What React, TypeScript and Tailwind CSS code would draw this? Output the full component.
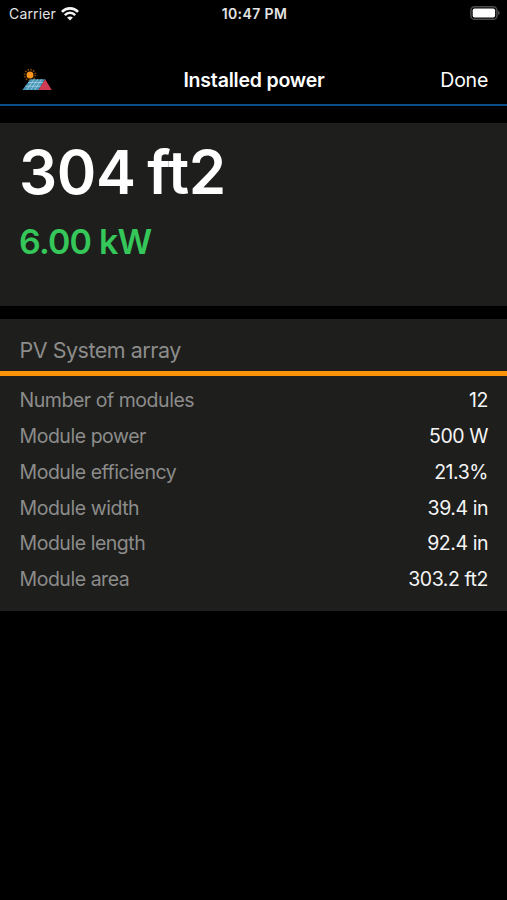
interface Spec {
  label: string;
  value: string;
}

const SPECS: Spec[] = [
  { label: 'Number of modules', value: '12' },
  { label: 'Module power', value: '500 W' },
  { label: 'Module efficiency', value: '21.3%' },
  { label: 'Module width', value: '39.4 in' },
  { label: 'Module length', value: '92.4 in' },
  { label: 'Module area', value: '303.2 ft2' },
];

function WifiIcon() {
  return (
    <svg width="18" height="14" viewBox="0 0 18 14" fill="none">
      <path d="M.9 4.9C5.4 .3 12.6 .3 17.1 4.9" stroke="#f4f4f4" strokeWidth="2.7" />
      <path d="M3.8 8.1C6.8 5.1 11.2 5.1 14.2 8.1" stroke="#f4f4f4" strokeWidth="2.5" />
      <path d="M9 13.6 6.1 10.6C7.8 9.2 10.2 9.2 11.9 10.6Z" fill="#f4f4f4" />
    </svg>
  );
}

function BatteryIcon() {
  return (
    <svg width="30" height="14" viewBox="0 0 30 14" fill="none">
      <rect x=".9" y=".7" width="26" height="12.6" rx="3.6" stroke="#4c4c4c" strokeWidth="1.5" />
      <rect x="2.7" y="2.5" width="22.4" height="9" rx="1.8" fill="#fff" />
      <path d="M28.2 4.8C30 5.4 30 8.6 28.2 9.2Z" fill="#5a5a5a" />
    </svg>
  );
}

function SolarLogo() {
  return (
    <svg width="32" height="24" viewBox="0 0 32 24" fill="none">
      <circle cx="8" cy="7" r="5.4" stroke="#8a4b08" strokeWidth="1.8" strokeDasharray="1.4 1.4" />
      <circle cx="8" cy="7" r="3.5" fill="#f7941d" />
      <path d="M8.4 11.2H23.2L16.5 22H.4Z" fill="#4596b8" />
      <path d="M23.2 11.2 29.7 22H16.5Z" fill="#d23c52" />
      <path
        d="M12.2 11.2 4.8 22M15.8 11.2 8.8 22M19.5 11.2 12.7 22M6 14.6H21M3.4 18.2H18.8"
        stroke="#a9d3e0"
        strokeWidth=".8"
      />
    </svg>
  );
}

function StatusBar() {
  return (
    <div className="grid h-7 grid-cols-[1fr_auto_1fr] items-center pr-[7px] pl-[9px] text-sm text-[#e4e4e4]">
      <div className="flex items-center gap-[5px]">
        <span className="tracking-[0.15px]">Carrier</span>
        <WifiIcon />
      </div>
      <span className="font-semibold tracking-[0.4px]">10:47 PM</span>
      <div className="-mt-[2px] flex justify-end">
        <BatteryIcon />
      </div>
    </div>
  );
}

function NavBar() {
  return (
    <header className="grid h-[78px] grid-cols-[1fr_auto_1fr] items-center border-b-2 border-[#0b4f86] pr-[19px] pl-[22px] pt-[30px] text-xl text-white">
      <div className="-mt-[2px]">
        <SolarLogo />
      </div>
      <h1 className="-ml-[2px] text-[19.5px] font-semibold tracking-[-0.2px]">Installed power</h1>
      <button className="justify-self-end text-[19.5px] tracking-[-0.25px]">Done</button>
    </header>
  );
}

function SpecRow({ label, value }: Spec) {
  return (
    <div className="flex h-[35.8px] items-center justify-between text-[19.5px]">
      <dt className="tracking-[-0.46px] text-[#8c8c8b]">{label}</dt>
      <dd className="tracking-[-0.45px] text-[#f5f5f5]">{value}</dd>
    </div>
  );
}

export default function App() {
  return (
    <div className="h-screen overflow-hidden bg-black font-['Inter',sans-serif]">
      <StatusBar />
      <NavBar />

      <section className="mt-[17px] h-[183px] bg-[#1e1e1c] pt-[17px] pl-[19px] font-semibold">
        <p className="text-[60px] leading-[64px] tracking-[-0.4px] text-white [word-spacing:-3px]">304 ft2</p>
        <p className="mt-[18px] text-[34px] leading-[40px] tracking-[-0.8px] text-[#35c759]">6.00 kW</p>
      </section>

      <section className="mt-[13px] h-[292px] bg-[#1e1e1c]">
        <h2 className="flex h-[52px] items-center pt-[10px] pl-[19.5px] text-[21.5px] tracking-[-0.48px] text-[#8c8c8b]">
          PV System array
        </h2>
        <div className="h-[5px] bg-[#fa920a]" />
        <dl className="pt-[7px] pr-[19px] pl-[19.5px]">
          {SPECS.map((s) => (
            <SpecRow key={s.label} {...s} />
          ))}
        </dl>
      </section>
    </div>
  );
}
